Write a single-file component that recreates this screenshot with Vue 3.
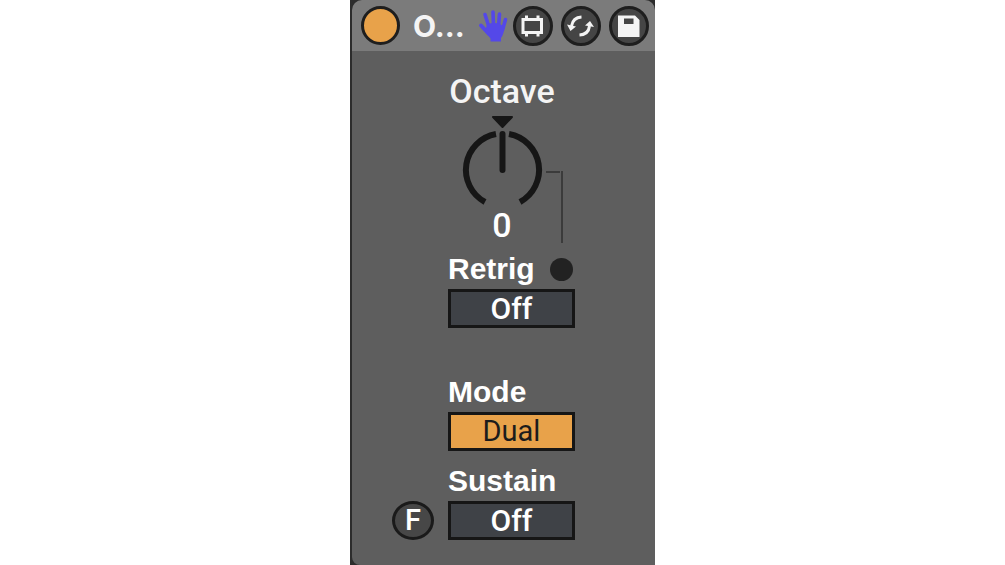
<script setup>
import { ref } from 'vue'

const active = ref(true)
const retrig = ref(false)
const dual = ref(true)
const sustain = ref(false)
</script>

<template>
  <main class="stage">
    <section class="device" aria-label="Octave device">
      <header class="bar">
        <button class="power" :class="{ idle: !active }" aria-label="Device on" @click="active = !active"></button>
        <h1 class="title">O...</h1>
        <svg class="hand" viewBox="0 0 32 34" aria-hidden="true">
          <g fill="none" stroke="#5448e8" stroke-linecap="round" stroke-width="3.6">
            <path d="M11 18 7 5.500" />
            <path d="M15.500 17 15 3" />
            <path d="M20.500 17 21.500 5" />
            <path d="M24.500 21 27.500 10.500" />
            <path d="M11 25 3 16.500" stroke-width="4" />
          </g>
          <path fill="#5448e8" d="M9 15.500 Q16 13 22 15 L26.500 18 Q26 25 23 29 V32.500H12.500V29.500L7 23Z" />
        </svg>
        <div class="tools">
          <button class="round" aria-label="Frame">
            <svg viewBox="0 0 40 40" aria-hidden="true">
              <g fill="none" stroke="#f4f4f4" stroke-width="3">
                <rect x="10" y="13.500" width="18.500" height="13" />
                <path d="M13.500 9.500v4M25 9.500v4M13.500 26.500v4M25 26.500v4" />
              </g>
            </svg>
          </button>
          <button class="round" aria-label="Swap">
            <svg viewBox="0 0 40 40" aria-hidden="true">
              <path fill="none" stroke="#f4f4f4" stroke-width="3" d="M20.500 11Q12 11.500 10.500 20M18.500 29Q27.500 28.500 28.500 20" />
              <path fill="#f4f4f4" d="M6 18.500 15 20.500 9.500 25ZM24 19.500 33 21 29 15Z" />
            </svg>
          </button>
          <button class="round" aria-label="Save">
            <svg viewBox="0 0 40 40" aria-hidden="true">
              <path fill="#f4f4f4" fill-rule="evenodd" d="M9 9.500H26L30.500 14V31H9ZM15 12.500V18H24.500V12.500Z" />
            </svg>
          </button>
        </div>
      </header>

      <div class="body">
        <div class="knob-row">
          <div class="knob">
            <span class="knob-name">Octave</span>
            <svg class="dial" viewBox="0 0 108 92" role="img" aria-label="Octave 0">
              <path fill="#161616" stroke="#161616" stroke-width="2" stroke-linejoin="round" d="M45 2H64L54.500 12Z" />
              <g fill="none" stroke="#161616" stroke-width="6">
                <path d="M48 19A36.500 36.500 0 0 0 37 87" />
                <path d="M61 19A36.500 36.500 0 0 1 72 87" />
                <path stroke-linecap="round" d="M54.500 19V55" />
              </g>
            </svg>
            <span class="knob-value">0</span>
          </div>
          <svg class="wire" viewBox="0 0 20 76" aria-hidden="true">
            <path fill="none" stroke="#3b3b3b" stroke-width="2" d="M0 5H14M16 4V76" />
          </svg>
        </div>

        <div class="field retrig">
          <div class="label-row">
            <label for="retrig">Retrig</label>
            <span class="lamp"></span>
          </div>
          <button id="retrig" class="toggle" @click="retrig = !retrig">{{ retrig ? 'On' : 'Off' }}</button>
        </div>

        <div class="field mode">
          <label for="mode">Mode</label>
          <button id="mode" class="toggle" :class="{ lit: dual }" @click="dual = !dual">{{ dual ? 'Dual' : 'Mono' }}</button>
        </div>

        <button class="flag" aria-label="Freeze">F</button>
        <div class="field sustain">
          <label for="sustain">Sustain</label>
          <button id="sustain" class="toggle" @click="sustain = !sustain">{{ sustain ? 'On' : 'Off' }}</button>
        </div>
      </div>
    </section>
  </main>
</template>

<style>
body {
  margin: 0;
  background: #fff;
}
</style>

<style scoped>
.stage {
  display: flex;
  justify-content: center;
  min-height: 100vh;
}
.device {
  box-sizing: border-box;
  display: flex;
  flex-direction: column;
  width: 100%;
  max-width: 305px;
  border-left: 2px solid #2c2c2c;
  background: #2c2c2c;
  color: #fff;
  font-family: Roboto, "Liberation Sans", sans-serif;
}
button {
  box-sizing: border-box;
  margin: 0;
  padding: 0;
  color: inherit;
  font-family: inherit;
  cursor: pointer;
}
.bar {
  box-sizing: border-box;
  display: flex;
  align-items: center;
  height: 51px;
  padding: 0 6px 0 9px;
  border-radius: 10px 10px 0 0;
  background: #7b7b7b;
}
.power {
  flex: none;
  width: 39px;
  height: 39px;
  border: 3px solid #1e1e1e;
  border-radius: 50%;
  background: #e8a24a;
}
.power.idle {
  background: #444;
}
.title {
  margin: 0 0 0 13px;
  color: #f4f4f4;
  font-family: Inter, Roboto, sans-serif;
  font-size: 30px;
  font-weight: 700;
  line-height: 36px;
}
.hand {
  width: 32px;
  height: 34px;
  margin-left: auto;
}
.tools {
  display: flex;
  gap: 8px;
  margin-left: 3px;
}
.round {
  width: 40px;
  height: 40px;
  border: 3px solid #1e1e1e;
  border-radius: 50%;
  background: #454545;
}
.round svg {
  display: block;
  width: 40px;
  height: 40px;
  margin: -3px;
}
.body {
  flex: 1;
  display: grid;
  grid-template-columns: 96px 127px;
  grid-template-rows: auto auto auto auto;
  align-content: start;
  padding: 22px 0 23px;
  border-bottom-left-radius: 8px;
  background: #5e5e5e;
}
.knob-row {
  grid-column: 2;
  display: flex;
  align-items: flex-end;
}
.knob {
  display: flex;
  flex-direction: column;
  align-items: center;
  width: 108px;
}
.knob-name {
  color: #f4f4f4;
  font-size: 34px;
  font-weight: 500;
  line-height: 36px;
}
.dial {
  width: 108px;
  height: 92px;
  margin-top: 6px;
}
.knob-value {
  font-size: 34px;
  font-weight: 500;
  line-height: 36px;
}
.wire {
  flex: none;
  width: 20px;
  height: 76px;
  margin: 0 0 0 -10px;
}
.field {
  grid-column: 2;
  display: flex;
  flex-direction: column;
}
.field label {
  font-family: "Liberation Sans", Arial, sans-serif;
  font-size: 30px;
  font-weight: 700;
  line-height: 36px;
}
.retrig {
  margin-top: 8px;
}
.label-row {
  display: flex;
  align-items: center;
  justify-content: space-between;
  padding-right: 2px;
}
.lamp {
  width: 23px;
  height: 23px;
  border-radius: 50%;
  background: #222;
}
.toggle {
  width: 100%;
  height: 39px;
  margin-top: 2px;
  border: 3px solid #161616;
  background: #3f4247;
  font-size: 30px;
  font-weight: 500;
  line-height: 33px;
}
.toggle.lit {
  background: #e8a24a;
  color: #1c1c1c;
  font-size: 29px;
  font-weight: 400;
}
.mode {
  margin-top: 46px;
}
.sustain {
  grid-row: 4;
  margin-top: 12px;
}
.flag {
  grid-column: 1;
  grid-row: 4;
  align-self: end;
  justify-self: end;
  width: 42px;
  height: 39px;
  margin-right: 14px;
  border: 3px solid #1a1a1a;
  border-radius: 50%;
  background: #474747;
  font-size: 29px;
  font-weight: 500;
  line-height: 33px;
}
</style>
